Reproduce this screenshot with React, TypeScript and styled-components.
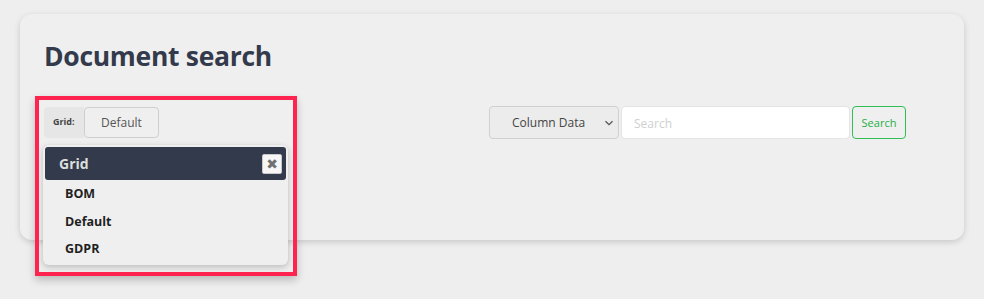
import React from "react";
import styled, { createGlobalStyle } from "styled-components";

const Global = createGlobalStyle`
  html, body { margin: 0; padding: 0; background: #eeeeee; }
  body { font-family: "Open Sans", "Noto Sans", Arial, sans-serif; }
`;

const Page = styled.div`
  padding: 14px 20px 59px 20px;
  min-height: 299px;
  box-sizing: border-box;
`;

const Card = styled.section`
  box-sizing: border-box;
  width: 944px;
  height: 226px;
  background: #efefef;
  border-radius: 12px;
  box-shadow: 0 2px 6px rgba(0, 0, 0, 0.16);
  padding: 24px 58px 0 24px;
`;

const Title = styled.h1`
  margin: 0;
  font-size: 26.5px;
  line-height: 36px;
  font-weight: 700;
  color: #333a4b;
  letter-spacing: -0.3px;
`;

const Toolbar = styled.div`
  margin-top: 32px;
  display: flex;
  justify-content: space-between;
  align-items: flex-start;
`;

const Picker = styled.div`
  position: relative;
  display: flex;
  align-items: stretch;
  height: 31px;
  margin-top: 1px;
`;

const Highlight = styled.div`
  position: absolute;
  left: -9px;
  top: -11px;
  width: 262px;
  height: 180px;
  box-sizing: border-box;
  border: 4px solid #ff2450;
  box-shadow: 0 4px 8px rgba(0, 0, 0, 0.22);
  pointer-events: none;
  z-index: 3;
`;

const PickerLabel = styled.span`
  box-sizing: border-box;
  width: 40px;
  display: flex;
  align-items: flex-start;
  padding: 8px 0 0 9px;
  background: #e6e6e6;
  border-radius: 4px 0 0 4px;
  font-size: 9px;
  font-weight: 700;
  color: #444;
`;

const PickerButton = styled.button`
  box-sizing: border-box;
  width: 75px;
  height: 31px;
  border: 1px solid #cfcfcf;
  border-radius: 4px;
  background: #efefef;
  font-family: inherit;
  font-size: 12px;
  color: #555;
  padding: 0;
`;

const Menu = styled.div`
  position: absolute;
  left: -1px;
  top: 38px;
  width: 245px;
  height: 120px;
  box-sizing: border-box;
  padding: 2px;
  background: #efefef;
  border-radius: 6px;
  box-shadow: 0 2px 6px rgba(0, 0, 0, 0.22);
  z-index: 2;
`;

const MenuHeader = styled.div`
  display: flex;
  align-items: center;
  justify-content: space-between;
  height: 33px;
  padding: 0 4px 0 14px;
  background: #323a4b;
  border-radius: 3px;
  color: #dedede;
  font-size: 14px;
  font-weight: 700;
`;

const CloseButton = styled.button`
  box-sizing: border-box;
  width: 20px;
  height: 20px;
  padding: 0;
  display: flex;
  align-items: center;
  justify-content: center;
  background: #f6f6f6;
  border: 1px solid #c8c8c8;
  border-radius: 2px;
  color: #707070;
  font-family: "DejaVu Sans", sans-serif;
  font-size: 14px;
  font-weight: 700;
  line-height: 1;
`;

const MenuList = styled.ul`
  list-style: none;
  margin: 0;
  padding: 0 0 0 20px;
`;

const MenuItem = styled.li`
  font-size: 12.5px;
  font-weight: 700;
  color: #1f1f1f;
  height: 27.5px;
  line-height: 27.5px;
`;

const SearchGroup = styled.div`
  display: flex;
  align-items: stretch;
  height: 33px;
  gap: 2px;
`;

const SelectBox = styled.div`
  box-sizing: border-box;
  width: 130px;
  display: flex;
  align-items: center;
  justify-content: space-between;
  padding: 0 4px 0 22px;
  background: #ececec;
  border: 1px solid #d0d0d0;
  border-radius: 4px;
  font-size: 12px;
  color: #444;
`;

const SearchInput = styled.input`
  box-sizing: border-box;
  width: 229px;
  border: 1px solid #e4e4e4;
  border-radius: 4px;
  background: #fff;
  padding: 2px 12px 0 12px;
  font-family: inherit;
  font-size: 12px;
  color: #333;
  outline: none;
  &::placeholder { color: #cfcfcf; }
`;

const SearchButton = styled.button`
  box-sizing: border-box;
  width: 54px;
  padding: 0;
  border: 1px solid #2fbf55;
  border-radius: 4px;
  background: #efefef;
  color: #22b043;
  font-family: inherit;
  font-size: 11px;
`;

const Chevron = () => (
  <svg width="10" height="10" viewBox="0 0 10 10" fill="none">
    <path d="M1.5 3.2 L5 6.7 L8.5 3.2" stroke="#555" strokeWidth="1.3" />
  </svg>
);

export default function App() {
  const items = ["BOM", "Default", "GDPR"];
  return (
    <>
      <Global />
      <Page>
        <Card>
          <Title>Document search</Title>
          <Toolbar>
            <Picker>
              <Highlight />
              <PickerLabel>Grid:</PickerLabel>
              <PickerButton>Default</PickerButton>
              <Menu>
                <MenuHeader>
                  <span>Grid</span>
                  <CloseButton>✖</CloseButton>
                </MenuHeader>
                <MenuList>
                  {items.map((i) => (
                    <MenuItem key={i}>{i}</MenuItem>
                  ))}
                </MenuList>
              </Menu>
            </Picker>
            <SearchGroup>
              <SelectBox>
                <span>Column Data</span>
                <Chevron />
              </SelectBox>
              <SearchInput placeholder="Search" />
              <SearchButton>Search</SearchButton>
            </SearchGroup>
          </Toolbar>
        </Card>
      </Page>
    </>
  );
}
